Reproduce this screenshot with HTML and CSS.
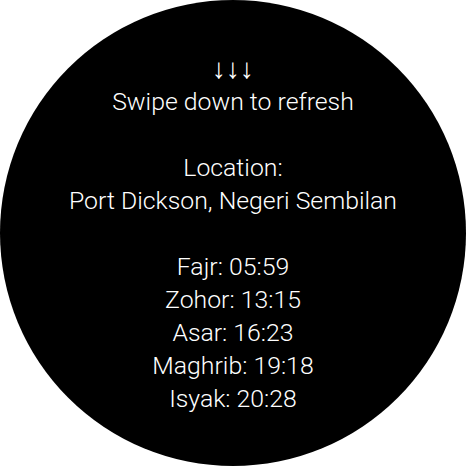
FILE: index.html
```html
<!DOCTYPE html>
<html>
<head>
<meta charset="utf-8">
<link rel="stylesheet" href="styles.css">
</head>
<body>
<div class="watch">
  <div class="content">
    <div class="line arrows">↓↓↓</div>
    <div class="line">Swipe down to refresh</div>
    <div class="line blank"></div>
    <div class="line">Location:</div>
    <div class="line">Port Dickson, Negeri Sembilan</div>
    <div class="line blank"></div>
    <div class="line">Fajr: 05:59</div>
    <div class="line">Zohor: 13:15</div>
    <div class="line">Asar: 16:23</div>
    <div class="line">Maghrib: 19:18</div>
    <div class="line">Isyak: 20:28</div>
  </div>
</div>
</body>
</html>
```
FILE: styles.css
```css
html, body {
  margin: 0;
  padding: 0;
  background: #fff;
}
.watch {
  width: 466px;
  height: 466px;
  border-radius: 50%;
  background: #000;
  display: flex;
  align-items: center;
  justify-content: center;
}
.content {
  color: #fff;
  font-family: Roboto, "DejaVu Sans", sans-serif;
  font-weight: 300;
  font-size: 24.8px;
  text-align: center;
}
.line {
  height: 33px;
  line-height: 33px;
  white-space: nowrap;
}
.arrows {
  font-family: "Liberation Sans", sans-serif;
  font-size: 28px;
}
```
